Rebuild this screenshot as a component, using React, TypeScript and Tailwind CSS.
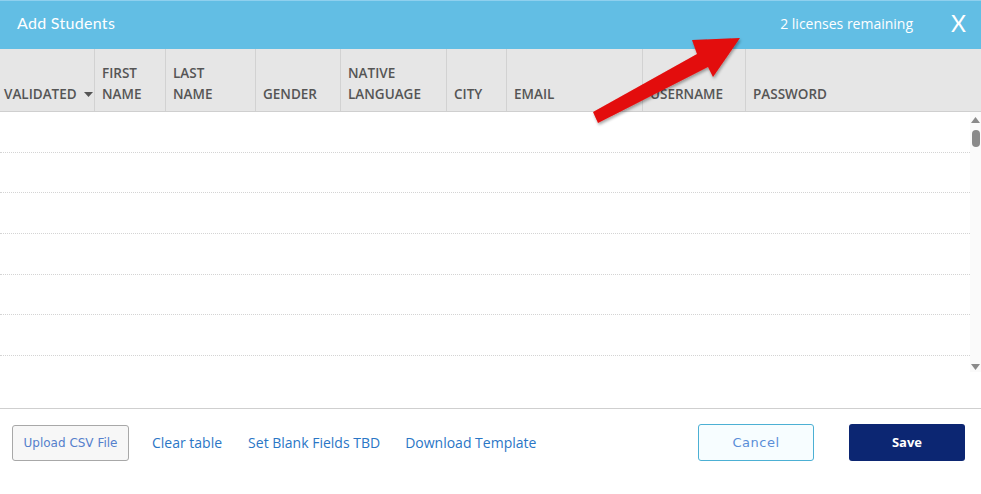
import React from "react";

const cols = [
  { w: 95, l1: "", l2: "VALIDATED", caret: true, pl: "pl-[4px]" },
  { w: 71, l1: "FIRST", l2: "NAME" },
  { w: 90, l1: "LAST", l2: "NAME" },
  { w: 85, l1: "", l2: "GENDER" },
  { w: 106, l1: "NATIVE", l2: "LANGUAGE" },
  { w: 60, l1: "", l2: "CITY" },
  { w: 136, l1: "", l2: "EMAIL" },
  { w: 103, l1: "", l2: "USERNAME" },
  { w: 224, l1: "", l2: "PASSWORD", last: true },
];

export default function App() {
  return (
    <div className="relative w-[981px] h-[494px] bg-white overflow-hidden font-['Open_Sans',sans-serif]">
      {/* header */}
      <div className="h-[49px] bg-[#62bee4] border-t border-[#8fd0ee] flex items-center pl-[17px] pr-[15px] pb-[4px]">
        <div className="text-white text-[16px] font-['Lato',sans-serif] tracking-[0.3px] flex-1">Add Students</div>
        <div className="text-white text-[14px] mr-[38px]">2 licenses remaining</div>
        <div className="text-white text-[23px] font-['Lato',sans-serif] leading-none">X</div>
      </div>
      {/* table header */}
      <div className="flex h-[63px] bg-[#e6e6e6] border-b border-[#cfcfcf]">
        {cols.map((c, i) => (
          <div
            key={i}
            style={{ width: c.w }}
            className={`flex flex-col justify-end pb-[6px] ${c.pl ?? "pl-[7px]"} ${c.last ? "" : "border-r border-[#d2d2d2]"} text-[13.5px] font-semibold text-[#555] leading-[21px] shrink-0`}
          >
            {c.l1 && <div>{c.l1}</div>}
            <div className="flex items-center">
              {c.l2}
              {c.caret && (
                <svg width="9" height="5" viewBox="0 0 9 5" className="ml-[7px]">
                  <path d="M0 0h9L4.5 5z" fill="#555" />
                </svg>
              )}
            </div>
          </div>
        ))}
      </div>
      {/* body */}
      <div className="flex h-[295px]">
        <div className="flex-1 flex flex-col">
          {[0, 1, 2, 3, 4, 5].map((r) => (
            <div key={r} className="h-[40.7px] border-b border-dotted border-[#d4d4d4] shrink-0" />
          ))}
        </div>
        <div className="w-[11px] h-[260px] flex flex-col items-center pt-[5px] pb-[2px] bg-[#fafafa]">
          <svg width="9" height="6" viewBox="0 0 9 6">
            <path d="M4.5 0L9 6H0z" fill="#8a8a8a" />
          </svg>
          <div className="w-[8px] h-[17px] rounded-[4px] bg-[#8a8a8a] mt-[7px]" />
          <div className="flex-1" />
          <svg width="9" height="6" viewBox="0 0 9 6">
            <path d="M0 0h9L4.5 6z" fill="#8a8a8a" />
          </svg>
        </div>
      </div>
      {/* footer */}
      <div className="border-t border-[#cfcfcf] flex items-center h-[86px] pl-[12px] pr-[16px] pb-[18px] mt-[1px]">
        <button className="w-[117px] h-[36px] border border-[#a8a8a8] rounded-[3px] bg-[#f7f7f7] text-[#5580cc] text-[12px] font-['DejaVu_Sans',sans-serif]">
          Upload CSV File
        </button>
        <span className="ml-[23px] text-[#2a76c6] text-[14px]">Clear table</span>
        <span className="ml-[26px] text-[#2a76c6] text-[14px]">Set Blank Fields TBD</span>
        <span className="ml-[25px] text-[#2a76c6] text-[14px]">Download Template</span>
        <div className="flex-1" />
        <button className="w-[116px] h-[37px] border border-[#4cb0d4] rounded-[3px] bg-[#f7fdff] text-[#5a8ed8] text-[13px] font-['DejaVu_Sans',sans-serif] tracking-[0.5px]">
          Cancel
        </button>
        <button className="ml-[35px] w-[116px] h-[37px] rounded-[3px] bg-[#0c2672] text-white text-[13px] font-bold">
          Save
        </button>
      </div>
      {/* red arrow annotation */}
      <svg className="absolute left-0 top-0 pointer-events-none" width="981" height="494" viewBox="0 0 981 494">
        <defs>
          <filter id="sh" x="-20%" y="-20%" width="140%" height="140%">
            <feDropShadow dx="1" dy="2" stdDeviation="1.5" floodColor="#000" floodOpacity="0.35" />
          </filter>
        </defs>
        <polygon
          points="593,112 697,54 692,40 740,38 713,77 708,67 598,123"
          fill="#e30b0b"
          filter="url(#sh)"
        />
      </svg>
    </div>
  );
}
